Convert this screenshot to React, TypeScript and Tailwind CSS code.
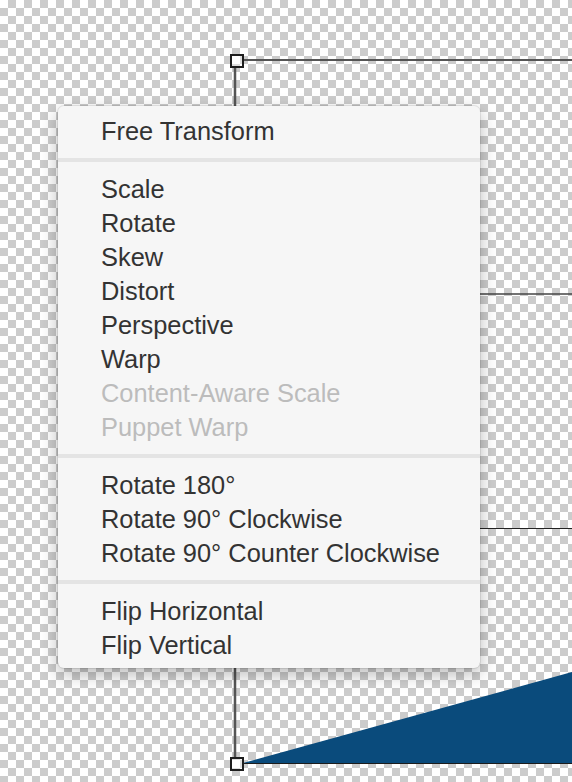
import React from "react";

type Entry = { label: string; disabled?: boolean } | "sep";

const entries: Entry[] = [
  { label: "Free Transform" },
  "sep",
  { label: "Scale" },
  { label: "Rotate" },
  { label: "Skew" },
  { label: "Distort" },
  { label: "Perspective" },
  { label: "Warp" },
  { label: "Content-Aware Scale", disabled: true },
  { label: "Puppet Warp", disabled: true },
  "sep",
  { label: "Rotate 180°" },
  { label: "Rotate 90° Clockwise" },
  { label: "Rotate 90° Counter Clockwise" },
  "sep",
  { label: "Flip Horizontal" },
  { label: "Flip Vertical" },
];

// canvas drawing: guide lines, handles and the blue shape
const CanvasArt = () => (
  <svg
    className="absolute inset-0"
    width={572}
    height={782}
    viewBox="0 0 572 782"
  >
    <polygon points="243,763 572,672 572,763" fill="#0a4b7c" />
    <line x1={243} y1={60} x2={572} y2={60} stroke="#555" strokeWidth={2} />
    <line x1={235} y1={294} x2={572} y2={294} stroke="#444" strokeWidth={1.5} />
    <line x1={235} y1={528.5} x2={572} y2={528.5} stroke="#222" strokeWidth={1} />
    <line x1={243} y1={763.5} x2={572} y2={763.5} stroke="#1c1c1c" strokeWidth={1} />
    <line x1={235} y1={68} x2={235} y2={757} stroke="#555" strokeWidth={2.5} />
    <rect x={231} y={55} width={12} height={12} fill="rgba(255,255,255,0.35)" stroke="#1e1e1e" strokeWidth={2} />
    <rect x={231} y={758} width={12} height={12} fill="rgba(255,255,255,0.35)" stroke="#1e1e1e" strokeWidth={2} />
  </svg>
);

const ContextMenu = () => (
  <div className="absolute left-[58px] top-[106px] w-[422px] rounded-[6px] bg-[#f6f6f6] pt-[8px] pb-[6px] shadow-[0_0_0_1px_rgba(0,0,0,0.08),0_6px_18px_rgba(0,0,0,0.28)]">
    {entries.map((e, i) =>
      e === "sep" ? (
        <div key={i} className="flex h-[24px] items-center">
          <div className="h-[4px] w-full bg-[#e4e4e4]" />
        </div>
      ) : (
        <div
          key={i}
          className={
            "flex h-[34px] items-center pl-[43px] pt-[2px] text-[25.4px] leading-none " +
            (e.disabled ? "text-[#bcbcbc]" : "text-[#333333]")
          }
        >
          {e.label}
        </div>
      )
    )}
  </div>
);

export default function App() {
  return (
    <div className="relative h-[782px] w-[572px] overflow-hidden bg-[conic-gradient(#cccccc_25%,#ffffff_0_50%,#cccccc_0_75%,#ffffff_0)] bg-[length:16px_16px] font-['Liberation_Sans',Arial,sans-serif]">
      <CanvasArt />
      <ContextMenu />
    </div>
  );
}
